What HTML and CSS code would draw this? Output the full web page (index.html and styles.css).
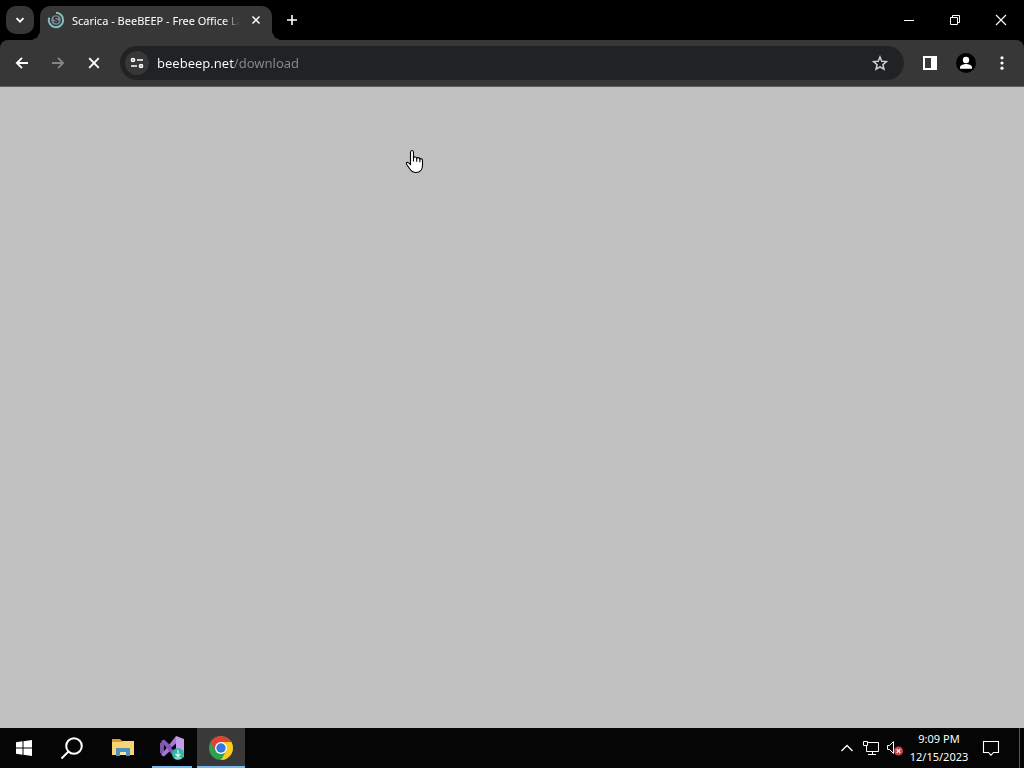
FILE: index.html
```html
<!DOCTYPE html>
<html lang="en">
<head>
<meta charset="utf-8">
<title>Scarica - BeeBEEP - Free Office Lan Messenger</title>
<link rel="stylesheet" href="styles.css">
</head>
<body>
<header class="browser">
  <div class="titlebar">
    <button class="tab-search" aria-label="Search tabs">
      <svg width="28" height="28" viewBox="0 0 28 28"><path d="M10.500 12.200l3.500 3.500 3.500-3.500" fill="none" stroke="#fff" stroke-width="1.800"/></svg>
    </button>
    <div class="tab">
      <svg class="favicon" width="18" height="18" viewBox="0 0 18 18">
        <circle cx="9" cy="9" r="4.800" fill="#7d8993"/>
        <path d="M11 6.800c-1.500-1.200-4-.600-3.800.800.200 1.500 4 1 4 2.800-.200 1.400-3 1.600-4.400.200" fill="none" stroke="#2a2a38" stroke-width="1.400"/>
        <path d="M9 1.800A7.200 7.200 0 1 1 2.200 6.600" fill="none" stroke="#7cc0c0" stroke-width="2"/>
      </svg>
      <span class="tab-title">Scarica - BeeBEEP - Free Office Lan Messenger</span>
      <button class="tab-close" aria-label="Close tab">
        <svg width="16" height="16" viewBox="0 0 16 16"><path d="M4.500 4.500l7 7M11.500 4.500l-7 7" stroke="#fff" stroke-width="1.500"/></svg>
      </button>
    </div>
    <button class="new-tab" aria-label="New tab">
      <svg width="16" height="16" viewBox="0 0 16 16"><path d="M8 3v10M3 8h10" stroke="#fff" stroke-width="1.600"/></svg>
    </button>
    <div class="window-buttons">
      <button aria-label="Minimize"><svg width="12" height="12" viewBox="0 0 12 12"><path d="M1 6.500h10" stroke="#fff"/></svg></button>
      <button aria-label="Restore"><svg width="12" height="12" viewBox="0 0 12 12"><path d="M1.500 3.500h7v7h-7zM3.500 3.500v-2h7v7h-2" fill="none" stroke="#fff"/></svg></button>
      <button aria-label="Close"><svg width="12" height="12" viewBox="0 0 12 12"><path d="M1 1l10 10M11 1L1 11" stroke="#fff" stroke-width="1.100"/></svg></button>
    </div>
  </div>
  <div class="toolbar">
    <button class="tool" aria-label="Back"><svg width="16" height="16" viewBox="0 0 16 16"><path d="M14 8H3M8 2.800L2.800 8 8 13.200" fill="none" stroke="#fff" stroke-width="1.800"/></svg></button>
    <button class="tool" aria-label="Forward" disabled><svg width="16" height="16" viewBox="0 0 16 16"><path d="M2 8h11M8 2.800L13.200 8 8 13.200" fill="none" stroke="#858585" stroke-width="1.800"/></svg></button>
    <button class="tool" aria-label="Stop"><svg width="16" height="16" viewBox="0 0 16 16"><path d="M3.200 3.200l9.600 9.600M12.800 3.200L3.200 12.800" stroke="#fff" stroke-width="1.900"/></svg></button>
    <div class="omnibox">
      <button class="site-info" aria-label="View site information">
        <svg width="16" height="16" viewBox="0 0 16 16"><g fill="none" stroke="#fff" stroke-width="1.700"><circle cx="4" cy="5" r="1.500"/><path d="M8 5h6M2 11h6"/><circle cx="12" cy="11" r="1.500"/></g></svg>
      </button>
      <input class="address" type="text" aria-label="Address" value="beebeep.net/download" spellcheck="false">
      <button class="bookmark" aria-label="Bookmark this tab">
        <svg width="16" height="16" viewBox="0 0 16 16"><path d="M8 2l1.800 4.200 4.600.400-3.500 3.100 1.100 4.500L8 11.800l-4 2.400 1.100-4.500L1.600 6.600l4.600-.400z" fill="none" stroke="#d0d0d0" stroke-width="1.500"/></svg>
      </button>
    </div>
    <button class="tool" aria-label="Side panel"><svg width="16" height="16" viewBox="0 0 16 16"><path d="M2 2h12v12H2z" fill="none" stroke="#fff" stroke-width="2"/><path d="M9 2h5v12H9z" fill="#fff"/></svg></button>
    <button class="tool" aria-label="Profile"><svg width="20" height="20" viewBox="0 0 20 20"><circle cx="10" cy="10" r="10" fill="#000"/><circle cx="10" cy="7" r="3.200" fill="#fff"/><path d="M4 15.800v-1.600c0-2 4-3.200 6-3.200s6 1.200 6 3.200v1.600z" fill="#fff"/></svg></button>
    <button class="tool" aria-label="Menu"><svg width="16" height="16" viewBox="0 0 16 16" fill="#fff"><circle cx="8" cy="2.800" r="1.600"/><circle cx="8" cy="8" r="1.600"/><circle cx="8" cy="13.200" r="1.600"/></svg></button>
  </div>
</header>
<main class="page">
  <svg class="pointer" width="20" height="26" viewBox="0 0 20 26"><path d="M5.500 15.500V3.500c0-2.600 3-2.600 3 0V9c.3-1.600 3.200-1.400 3.200.600.300-1.600 3.200-1.200 3.200.800.400-1.300 2.600-.900 2.600 1.100v5c0 4-2.500 7-6.500 7-3.500 0-5-1.500-6.500-4L1.600 15.300c-.9-1.700 1-2.500 2-1.500z" fill="#fff" stroke="#000" stroke-width="1.100"/><path d="M8.500 8v4.500M11.700 9v3.800M14.900 10v3.200" stroke="#000" stroke-width="1.100"/></svg>
</main>
<footer class="taskbar">
  <button class="launch" aria-label="Start"><svg width="18" height="18" viewBox="0 0 18 18" fill="#fff"><path d="M1 3.200L7.500 2.300V8.500H1zM8.500 2.200L17 1v7.500H8.500zM1 9.500h6.500v6.200L1 14.800zM8.500 9.500H17V17l-8.500-1.200z"/></svg></button>
  <button class="launch" aria-label="Search"><svg width="24" height="24" viewBox="0 0 24 24"><circle cx="14" cy="10" r="7.800" fill="none" stroke="#fff" stroke-width="2"/><path d="M8.500 15.500L1.500 22.500" stroke="#fff" stroke-width="2"/></svg></button>
  <div class="apps">
    <button class="app" aria-label="File Explorer"><svg width="22" height="20" viewBox="0 0 22 20"><path d="M0 1h8l2 2h11v5H0z" fill="#d99a32"/><path d="M0 4h9l2-1h11v14H0z" fill="#f8d573"/><path d="M4 18v-7q0-1 1-1h12q1 0 1 1v7h-4v-4H8v4z" fill="#4b92c4"/><path d="M8 14h6v3H8z" fill="#f7e2a0"/></svg></button>
    <button class="app running" aria-label="Visual Studio Installer"><svg width="26" height="26" viewBox="0 0 26 26"><path d="M1 8l4-2v14l-4-2z" fill="#7d56ae"/><path d="M2 20l3 1.500L20 7.500 17 1z" fill="#a678d6"/><path d="M2 6l3-1.500L20 18l-3 6.500z" fill="#8359bd"/><path d="M17 1l8 3v18l-8 3z" fill="#c69bea"/><path d="M17 8.500L12 13l5 4.500z" fill="#050505"/><circle cx="19" cy="19" r="6" fill="#35b5a4"/><path d="M19 15v6M16.500 19l2.500 2.500 2.500-2.500M16 23h6" fill="none" stroke="#d8fff5" stroke-width="1.200"/></svg></button>
    <button class="app active" aria-label="Google Chrome"><svg width="24" height="24" viewBox="0 0 24 24"><circle cx="12" cy="12" r="12" fill="#2ca150"/><path d="M1.610 6A12 12 0 0 1 22.390 6L12 6 6.800 15z" fill="#e34133"/><path d="M22.390 6A12 12 0 0 1 12 24l5.200-9L12 6z" fill="#fbcb20"/><circle cx="12" cy="12" r="6" fill="#fff"/><circle cx="12" cy="12" r="4.700" fill="#3278df"/></svg></button>
  </div>
  <div class="tray">
    <button class="tray-icon" aria-label="Show hidden icons"><svg width="14" height="14" viewBox="0 0 14 14"><path d="M1.500 10L7 4.500l5.500 5.500" fill="none" stroke="#fff" stroke-width="1.300"/></svg></button>
    <button class="tray-icon" aria-label="Network"><svg width="18" height="16" viewBox="0 0 18 16"><path d="M6 2.500h10.500v9H4.500V6M10.500 11.500v3M6 14.500h8M1.500 1.500h4v4h-4z" fill="none" stroke="#fff"/></svg></button>
    <button class="tray-icon" aria-label="Volume muted"><svg width="18" height="18" viewBox="0 0 18 18"><path d="M1.500 6.500h2L7.500 2.500v12l-4-4h-2z" fill="none" stroke="#fff"/><circle cx="12.500" cy="12" r="4.500" fill="#c9454b"/><path d="M10.700 10.200l3.600 3.600M14.300 10.200l-3.600 3.600" stroke="#fff" stroke-width="1.200"/></svg></button>
    <button class="clock"><time>9:09 PM</time><time>12/15/2023</time></button>
    <button class="notices" aria-label="Notifications"><svg width="18" height="18" viewBox="0 0 18 18"><path d="M1.500 2.500h15v11h-5L9 16.200l-2.500-2.700h-5z" fill="none" stroke="#fff" stroke-width="1.100"/></svg></button>
    <button class="show-desktop" aria-label="Show desktop"></button>
  </div>
</footer>
</body>
</html>
```

FILE: styles.css
```css
* { box-sizing: border-box; }

body {
  margin: 0;
  min-height: 100vh;
  display: flex;
  flex-direction: column;
  background: #c0c0c0;
  color: #fff;
  font-family: "Noto Sans", "Open Sans", sans-serif;
  font-size: 11px;
}

button {
  display: flex;
  align-items: center;
  justify-content: center;
  flex: none;
  margin: 0;
  padding: 0;
  border: 0;
  background: none;
  color: inherit;
  font: inherit;
}

svg { display: block; flex: none; }

.browser { background: #000; }

.titlebar {
  display: flex;
  height: 40px;
  padding-left: 6px;
}

.tab-search {
  width: 28px;
  height: 28px;
  margin-top: 6px;
  border-radius: 10px;
  background: #373737;
}

.tab {
  position: relative;
  display: flex;
  align-items: center;
  width: 232px;
  margin: 6px 0 0 6px;
  padding: 0 8px 6px 7px;
  border-radius: 10px 10px 0 0;
  background: #373737;
}

/* Flared feet where the tab meets the toolbar */
.tab::before,
.tab::after {
  content: "";
  position: absolute;
  bottom: 0;
  width: 10px;
  height: 10px;
}

.tab::before {
  right: 100%;
  background: radial-gradient(circle at 0 0, transparent 10px, #373737 10px);
}

.tab::after {
  left: 100%;
  background: radial-gradient(circle at 100% 0, transparent 10px, #373737 10px);
}

.tab-title {
  flex: 1;
  min-width: 0;
  margin: 0 8px 0 7px;
  overflow: hidden;
  white-space: nowrap;
  -webkit-mask-image: linear-gradient(to left, transparent, #000 16px);
  mask-image: linear-gradient(to left, transparent, #000 16px);
}

.tab-close { width: 16px; height: 16px; }

.new-tab { width: 40px; height: 40px; }

.window-buttons { display: flex; margin-left: auto; }

.window-buttons button { width: 46px; height: 40px; }

.toolbar {
  display: flex;
  align-items: center;
  height: 47px;
  padding: 0 4px;
  border-bottom: 1px solid #606060;
  border-radius: 8px 8px 0 0;
  background: #373737;
}

.tool { width: 36px; height: 34px; }

.omnibox {
  display: flex;
  align-items: center;
  flex: 1;
  min-width: 0;
  height: 34px;
  margin: 0 8px;
  padding: 0 5px;
  border-radius: 17px;
  background: #202225;
}

.site-info {
  width: 24px;
  height: 24px;
  border-radius: 12px;
  background: #373737;
}

.address {
  flex: 1;
  min-width: 0;
  height: 28px;
  margin-left: 8px;
  padding: 0;
  border: 0;
  outline: 0;
  background: linear-gradient(to right, #fff 77px, #888c91 77px);
  -webkit-background-clip: text;
  background-clip: text;
  color: transparent;
  font: 13px/20px "Noto Sans", "Open Sans", sans-serif;
}

.bookmark { width: 38px; height: 28px; }

.page {
  position: relative;
  flex: 1;
  background: #c0c0c0;
}

.pointer {
  position: absolute;
  top: 62px;
  left: 405px;
}

.taskbar {
  display: flex;
  height: 40px;
  background: #050505;
}

.launch { width: 48px; }

.apps { display: flex; gap: 1px; margin-left: 3px; }

.app { position: relative; width: 48px; }

.running::after,
.active::after {
  content: "";
  position: absolute;
  right: 4px;
  bottom: 0;
  left: 4px;
  height: 2px;
  background: #76b9ed;
}

.active { background: #393939; }

.active::after { right: 0; left: 0; }

.tray { display: flex; margin-left: auto; }

.tray-icon { width: 24px; }

.clock {
  flex-direction: column;
  width: 64px;
  line-height: 18px;
}

.notices { width: 40px; }

.show-desktop {
  width: 5px;
  margin-left: 8px;
  border-left: 1px solid #555;
}
```
